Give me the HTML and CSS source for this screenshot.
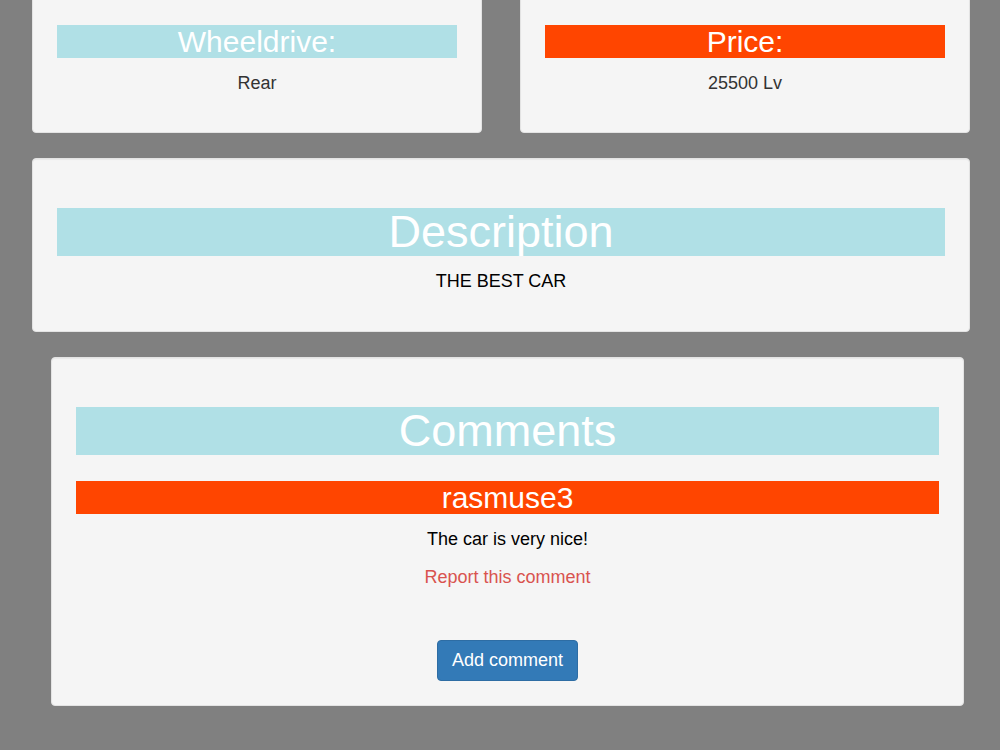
FILE: index.html
```html
<!DOCTYPE html>
<html lang="en">
<head>
    <meta charset="UTF-8">
    <meta name="viewport" content="width=device-width, initial-scale=1.0">
    <title>Car Details</title>
    <link rel="stylesheet" href="styles.css">
</head>
<body>
    <div class="container">
        <div class="row">
            <div class="well">
                <h2 class="title blue">Wheeldrive:</h2>
                <p class="value">Rear</p>
            </div>
            <div class="well">
                <h2 class="title red">Price:</h2>
                <p class="value">25500 Lv</p>
            </div>
        </div>
        <div class="well description">
            <h1 class="title blue big">Description</h1>
            <p class="text">THE BEST CAR</p>
        </div>
        <div class="well comments">
            <h1 class="title blue big">Comments</h1>
            <div class="comment">
                <h2 class="title red">rasmuse3</h2>
                <p class="text">The car is very nice!</p>
                <a class="report" href="#">Report this comment</a>
            </div>
            <div class="actions">
                <button class="btn">Add comment</button>
            </div>
        </div>
    </div>
</body>
</html>
```

FILE: styles.css
```css
body {
    margin: 0;
    background: #808080;
    font-family: "Liberation Sans", Arial, sans-serif;
    font-size: 18px;
    color: #333;
}

.container {
    padding: 0 30px 0 32px;
    margin-top: -25px;
}

.row {
    display: grid;
    grid-template-columns: 1fr 1fr;
    gap: 38px;
    margin-bottom: 25px;
}

.well {
    background: #f5f5f5;
    border: 1px solid #e3e3e3;
    border-radius: 4px;
    box-shadow: inset 0 1px 1px rgba(0, 0, 0, 0.05);
    padding: 49px 24px 36px;
    text-align: center;
}

.description {
    margin-bottom: 25px;
    padding-bottom: 37px;
}

.comments {
    margin: 0 6px 0 19px;
    padding-bottom: 24px;
}

.title {
    margin: 0;
    color: #fff;
    font-weight: normal;
    font-size: 30px;
    line-height: 33px;
}

.title.big {
    font-size: 45px;
    line-height: 48px;
}

.blue {
    background: #b0e0e6;
}

.red {
    background: #ff4500;
}

.value,
.text {
    margin: 12px 0 0;
    line-height: 26px;
}

.text {
    color: #000;
}

.comment {
    margin-top: 26px;
}

.report {
    display: block;
    margin-top: 12px;
    line-height: 26px;
    color: #d9534f;
    text-decoration: none;
}

.actions {
    margin-top: 50px;
}

.btn {
    font-family: inherit;
    font-size: 18px;
    line-height: 23px;
    padding: 8px 14px;
    color: #fff;
    background: #337ab7;
    border: 1px solid #2e6da4;
    border-radius: 4px;
    cursor: pointer;
}

.btn:hover {
    background: #286090;
}
```
